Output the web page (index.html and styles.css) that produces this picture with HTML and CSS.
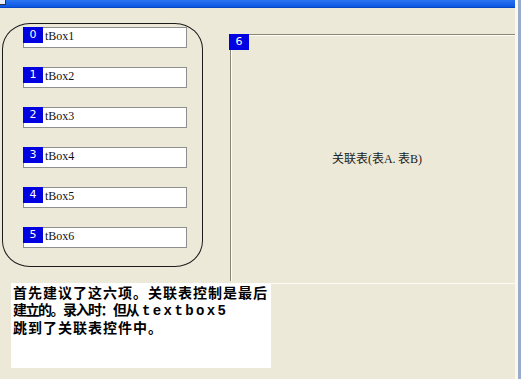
FILE: index.html
```html
<!DOCTYPE html>
<html lang="zh">

<head>
    <meta charset="UTF-8">
    <title>关联表</title>
    <link rel="stylesheet" href="styles.css">
</head>

<body>

    <div class="window">
        <div class="client">
            <div class="titlebar"><span class="sysicon"></span></div>

            <div class="main">
                <div class="group">
                    <div class="tbox"><span class="tag">0</span><span class="name">tBox1</span></div>
                    <div class="tbox"><span class="tag">1</span><span class="name">tBox2</span></div>
                    <div class="tbox"><span class="tag">2</span><span class="name">tBox3</span></div>
                    <div class="tbox"><span class="tag">3</span><span class="name">tBox4</span></div>
                    <div class="tbox"><span class="tag">4</span><span class="name">tBox5</span></div>
                    <div class="tbox"><span class="tag">5</span><span class="name">tBox6</span></div>
                </div>

                <div class="panel">
                    <span class="tag panel-tag">6</span>
                    <p class="panel-caption">关联表(表A.&thinsp;表B)</p>
                </div>
            </div>

            <div class="bottom">
                <div class="note">
                    <span class="line line-1">首先建议了这六项。关联表控制是最后</span>
                    <span class="line line-2">建立的。录入时：但从<span class="mono">textbox5</span></span>
                    <span class="line line-3">跳到了关联表控件中。</span>
                </div>
                <div class="rule"></div>
            </div>
        </div>
    </div>

</body>

</html>
```

FILE: styles.css
```css
body {
    margin: 0;
    background-color: #ece9d8;
    font-family: "Liberation Serif", "Noto Sans CJK SC", serif;
    color: #111;
}

.window {
    width: 521px;
    height: 379px;
    box-sizing: border-box;
    border-right: 3px solid #9aaccb;
    overflow: hidden;
}

.client {
    height: 100%;
    box-sizing: border-box;
    border-right: 3px solid #fbf8ee;
    display: flex;
    flex-direction: column;
}

.titlebar {
    height: 8px;
    flex-shrink: 0;
    background: linear-gradient(#2a74f0, #0a57e3);
    border-bottom: 1px solid #0845c4;
    box-sizing: border-box;
    position: relative;
}

.sysicon {
    position: absolute;
    left: 0;
    top: 0;
    width: 5px;
    height: 4px;
    background-color: #e8eef8;
    border-right: 1px solid #333;
    border-bottom: 1px solid #333;
}

.main {
    display: flex;
    align-items: flex-start;
}

.group {
    margin: 15px 0 0 2px;
    width: 201px;
    height: 244px;
    box-sizing: border-box;
    border: 1px solid #1c1c1c;
    border-radius: 28px / 26px;
    padding: 3px 0 0 20px;
    display: flex;
    flex-direction: column;
    gap: 19px;
}

.tbox {
    width: 164px;
    height: 21px;
    box-sizing: border-box;
    border: 1px solid #8e8f8f;
    background-color: white;
    display: flex;
    align-items: flex-start;
}

.tag {
    display: block;
    width: 20px;
    height: 16px;
    margin: -1px 0 0 -1px;
    background-color: #0000e0;
    color: white;
    font-family: "DejaVu Sans", sans-serif;
    font-size: 11px;
    line-height: 15px;
    text-align: center;
    flex-shrink: 0;
}

.tbox .name {
    margin-left: 2px;
    font-size: 12px;
    line-height: 17px;
}

.panel {
    position: relative;
    flex: 1;
    margin: 26px 0 0 27px;
    height: 247px;
    box-sizing: border-box;
    border-top: 1px solid #8a8777;
    border-left: 1px solid #8a8777;
    box-shadow: inset 1px 1px 0 #fffdf6;
    display: flex;
    align-items: center;
    justify-content: center;
}

.panel-tag {
    position: absolute;
    left: -2px;
    top: -1px;
    margin: 0;
}

.panel-caption {
    margin: 0 0 0 8px;
    font-size: 12px;
    color: #222;
}

.bottom {
    display: flex;
    align-items: flex-start;
    margin-top: 2px;
}

.note {
    margin-left: 11px;
    width: 260px;
    height: 85px;
    box-sizing: border-box;
    padding: 2px 0 0 2px;
    background-color: white;
    font-family: "Liberation Sans", "Noto Sans CJK SC", sans-serif;
    font-weight: bold;
    font-size: 14px;
    line-height: 17px;
    color: #000;
}

.note .line {
    display: block;
    white-space: nowrap;
}

.line-1,
.line-3 {
    letter-spacing: 1px;
}

.line-2 {
    letter-spacing: -1.5px;
}

.note .mono {
    font-family: "Liberation Mono", monospace;
    letter-spacing: 2.4px;
    margin-left: 4px;
}

.rule {
    flex: 1;
    border-top: 1px solid #fffdf3;
}
```
